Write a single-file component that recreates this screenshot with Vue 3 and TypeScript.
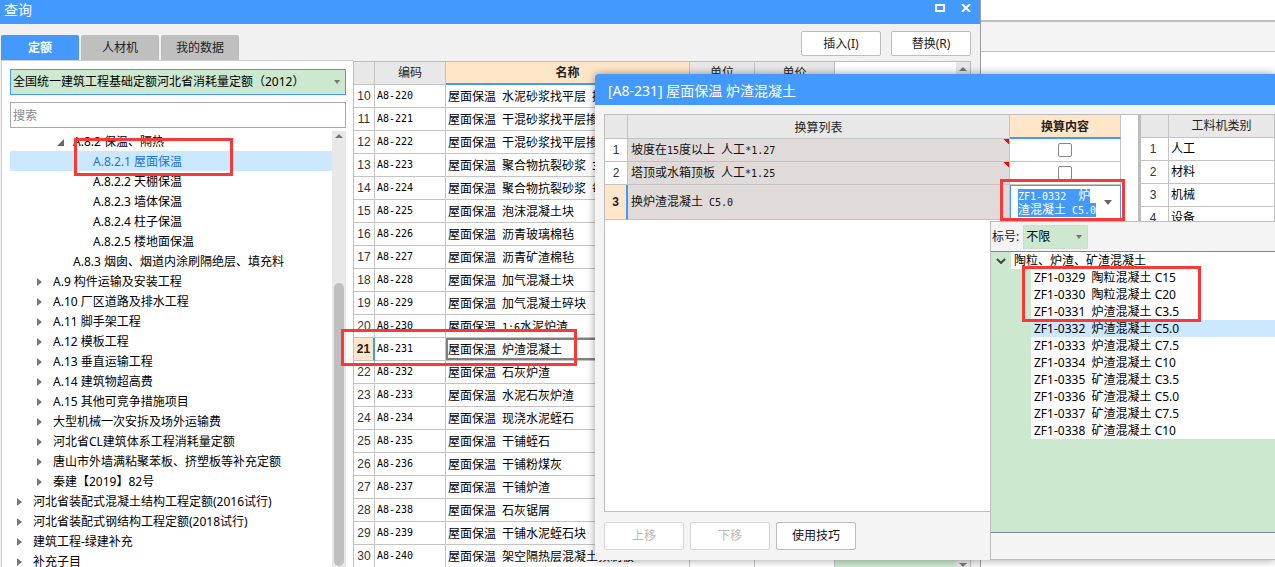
<script setup lang="ts">
import { ref } from 'vue'

interface TreeNode { label: string; level: number; state: 'open' | 'closed' | 'leaf' }
interface QuotaRow { no: number; code: string; name: string }

const tabs = ['定额', '人材机', '我的数据']
const activeTab = ref('定额')
const keyword = ref('')
const selectedNode = ref('A.8.2.1 屋面保温')
const selectedRow = ref(21)
const selectedMix = ref('ZF1-0332  炉渣混凝土 C5.0')

const tree: TreeNode[] = [
  { label: 'A.8.2 保温、隔热', level: 2, state: 'open' },
  { label: 'A.8.2.1 屋面保温', level: 3, state: 'leaf' },
  { label: 'A.8.2.2 天棚保温', level: 3, state: 'leaf' },
  { label: 'A.8.2.3 墙体保温', level: 3, state: 'leaf' },
  { label: 'A.8.2.4 柱子保温', level: 3, state: 'leaf' },
  { label: 'A.8.2.5 楼地面保温', level: 3, state: 'leaf' },
  { label: 'A.8.3 烟囱、烟道内涂刷隔绝层、填充料', level: 2, state: 'leaf' },
  { label: 'A.9 构件运输及安装工程', level: 1, state: 'closed' },
  { label: 'A.10 厂区道路及排水工程', level: 1, state: 'closed' },
  { label: 'A.11 脚手架工程', level: 1, state: 'closed' },
  { label: 'A.12 模板工程', level: 1, state: 'closed' },
  { label: 'A.13 垂直运输工程', level: 1, state: 'closed' },
  { label: 'A.14 建筑物超高费', level: 1, state: 'closed' },
  { label: 'A.15 其他可竞争措施项目', level: 1, state: 'closed' },
  { label: '大型机械一次安拆及场外运输费', level: 1, state: 'closed' },
  { label: '河北省CL建筑体系工程消耗量定额', level: 1, state: 'closed' },
  { label: '唐山市外墙满粘聚苯板、挤塑板等补充定额', level: 1, state: 'closed' },
  { label: '秦建【2019】82号', level: 1, state: 'closed' },
  { label: '河北省装配式混凝土结构工程定额(2016试行)', level: 0, state: 'closed' },
  { label: '河北省装配式钢结构工程定额(2018试行)', level: 0, state: 'closed' },
  { label: '建筑工程-绿建补充', level: 0, state: 'closed' },
  { label: '补充子目', level: 0, state: 'closed' },
]

const names = [
  '水泥砂浆找平层 掺', '干混砂浆找平层掺', '干混砂浆找平层掺', '聚合物抗裂砂浆 3', '聚合物抗裂砂浆 每',
  '泡沫混凝土块', '沥青玻璃棉毡', '沥青矿渣棉毡', '加气混凝土块', '加气混凝土碎块', '1:6水泥炉渣',
  '炉渣混凝土', '石灰炉渣', '水泥石灰炉渣', '现浇水泥蛭石', '干铺蛭石', '干铺粉煤灰', '干铺炉渣',
  '石灰锯屑', '干铺水泥蛭石块', '架空隔热层混凝土预制板',
]
const rows: QuotaRow[] = names.map((n, i) => ({ no: 10 + i, code: `A8-${220 + i}`, name: `屋面保温 ${n}` }))

const conversions = [
  { text: '坡度在15度以上 人工*1.27', on: ref(false) },
  { text: '塔顶或水箱顶板 人工*1.25', on: ref(false) },
]
const categories = ['人工', '材料', '机械', '设备']
const mixes = [
  'ZF1-0329  陶粒混凝土 C15', 'ZF1-0330  陶粒混凝土 C20', 'ZF1-0331  炉渣混凝土 C3.5',
  'ZF1-0332  炉渣混凝土 C5.0', 'ZF1-0333  炉渣混凝土 C7.5', 'ZF1-0334  炉渣混凝土 C10',
  'ZF1-0335  矿渣混凝土 C3.5', 'ZF1-0336  矿渣混凝土 C5.0', 'ZF1-0337  矿渣混凝土 C7.5',
  'ZF1-0338  矿渣混凝土 C10',
]
const editorLines = ['ZF1-0332  炉', '渣混凝土 C5.0']

// Grid cells set half-width characters in a monospaced face, so they are split from the Chinese runs.
const parts = (s: string): string[] => s.split(/([ -~]+)/).filter(Boolean)
const isHalf = (s: string): boolean => /^[ -~]/.test(s)
</script>

<template>
  <div class="desktop">
    <div class="backdrop"><div class="backdrop-bar"></div></div>

    <section class="query" aria-label="查询">
      <header class="query-title">
        <h1>查询</h1>
        <div class="win-buttons">
          <button type="button" aria-label="最大化">
            <svg width="10" height="8" viewBox="0 0 10 8"><rect x="1" y="1" width="8" height="6" fill="none" stroke="#fff" stroke-width="2" /></svg>
          </button>
          <button type="button" aria-label="关闭">
            <svg width="10" height="8" viewBox="0 0 10 8"><path d="M1 0 9 8M9 0 1 8" fill="none" stroke="#fff" stroke-width="2" /></svg>
          </button>
        </div>
      </header>

      <div class="toolbar">
        <nav class="tabs">
          <button v-for="t in tabs" :key="t" type="button" class="tab" :class="{ active: t === activeTab }" @click="activeTab = t">{{ t }}</button>
        </nav>
        <div class="actions">
          <button type="button" class="btn">插入(I)</button>
          <button type="button" class="btn">替换(R)</button>
        </div>
      </div>

      <div class="query-body">
        <aside class="side">
          <div class="pick library">
            <select aria-label="定额库"><option>全国统一建筑工程基础定额河北省消耗量定额（2012）</option></select>
            <svg width="6" height="4" viewBox="0 0 6 4"><path d="M0 0h6L3 4z" fill="#777" /></svg>
          </div>
          <input v-model="keyword" class="search" type="text" placeholder="搜索" aria-label="搜索" />
          <div class="tree-box">
            <ul class="tree">
              <li v-for="n in tree" :key="n.label" :class="['lv' + n.level, { chosen: n.label === selectedNode }]" @click="selectedNode = n.label">
                <span class="twist">
                  <svg v-if="n.state === 'closed'" width="5" height="8" viewBox="0 0 5 8"><path d="M0 0 5 4 0 8z" fill="#777" /></svg>
                  <svg v-else-if="n.state === 'open'" width="7" height="7" viewBox="0 0 7 7"><path d="M7 0v7H0z" fill="#666" /></svg>
                </span>
                <span>{{ n.label }}</span>
              </li>
            </ul>
            <div class="scroll">
              <svg width="8" height="4" viewBox="0 0 8 4"><path d="M0 4 4 0l4 4z" fill="#777" /></svg>
              <i class="thumb"></i>
            </div>
          </div>
        </aside>

        <div class="grid-pane">
          <table class="grid quota">
            <colgroup><col class="c-no" /><col class="c-code" /><col class="c-name" /><col class="c-unit" /><col class="c-price" /></colgroup>
            <thead><tr><th></th><th>编码</th><th class="hot">名称</th><th>单位</th><th>单价</th></tr></thead>
            <tbody>
              <tr v-for="r in rows" :key="r.no" :class="{ current: r.no === selectedRow }" @click="selectedRow = r.no">
                <td class="no">{{ r.no }}</td>
                <td class="code"><span class="half">{{ r.code }}</span></td>
                <td class="name"><span v-for="(p, i) in parts(r.name)" :key="i" :class="{ half: isHalf(p) }">{{ p }}</span></td>
                <td></td><td></td>
              </tr>
            </tbody>
          </table>
          <div class="void"></div>
          <div class="scroll tall">
            <svg width="8" height="4" viewBox="0 0 8 4"><path d="M0 4 4 0l4 4z" fill="#777" /></svg>
            <svg width="8" height="4" viewBox="0 0 8 4"><path d="M0 0h8L4 4z" fill="#777" /></svg>
          </div>
        </div>
      </div>
    </section>

    <section class="dialog" aria-label="换算">
      <header class="dialog-title"><h2>[A8-231] 屋面保温 炉渣混凝土</h2></header>
      <div class="dialog-body">
        <div class="frames">
          <div class="left-frame">
            <table class="grid conv">
              <colgroup><col class="d-no" /><col class="d-list" /><col class="d-content" /></colgroup>
              <thead><tr><th></th><th>换算列表</th><th class="hot">换算内容</th></tr></thead>
              <tbody>
                <tr v-for="(c, k) in conversions" :key="k">
                  <td class="no">{{ k + 1 }}</td>
                  <td class="item flagged"><span v-for="(p, i) in parts(c.text)" :key="i" :class="{ half: isHalf(p) }">{{ p }}</span></td>
                  <td class="tick"><input v-model="c.on.value" type="checkbox" :aria-label="c.text" /></td>
                </tr>
                <tr class="current big">
                  <td class="no">3</td>
                  <td class="item"><span v-for="(p, i) in parts('换炉渣混凝土 C5.0')" :key="i" :class="{ half: isHalf(p) }">{{ p }}</span></td>
                  <td class="edit">
                    <button type="button" aria-haspopup="listbox" aria-expanded="true">
                      <span class="value">
                        <mark v-for="l in editorLines" :key="l"><span v-for="(p, i) in parts(l)" :key="i" :class="{ half: isHalf(p) }">{{ p }}</span></mark>
                      </span>
                      <svg width="8" height="5" viewBox="0 0 8 5"><path d="M0 0h8L4 5z" fill="#666" /></svg>
                    </button>
                  </td>
                </tr>
              </tbody>
            </table>
          </div>
          <div class="right-frame">
            <table class="grid kinds">
              <colgroup><col class="k-no" /><col /></colgroup>
              <thead><tr><th></th><th>工料机类别</th></tr></thead>
              <tbody><tr v-for="(c, k) in categories" :key="c"><td class="no">{{ k + 1 }}</td><td>{{ c }}</td></tr></tbody>
            </table>
          </div>
        </div>
        <footer class="foot">
          <button type="button" class="btn" disabled>上移</button>
          <button type="button" class="btn" disabled>下移</button>
          <button type="button" class="btn">使用技巧</button>
        </footer>
      </div>
    </section>

    <section class="popup" aria-label="材料选择">
      <div class="popup-head">
        <label for="grade">标号:</label>
        <div class="pick grade">
          <select id="grade"><option>不限</option></select>
          <svg width="6" height="4" viewBox="0 0 6 4"><path d="M0 0h6L3 4z" fill="#777" /></svg>
        </div>
      </div>
      <div class="popup-list">
        <div class="group">
          <span class="chev"><svg width="10" height="6" viewBox="0 0 10 6"><path d="M1 1l4 4 4-4" fill="none" stroke="#444" stroke-width="2" /></svg></span>
          <span class="group-name">陶粒、炉渣、矿渣混凝土</span>
        </div>
        <ul>
          <li v-for="m in mixes" :key="m" :class="{ chosen: m === selectedMix }" @click="selectedMix = m">{{ m }}</li>
        </ul>
      </div>
    </section>

    <i class="callout on-tree"></i>
    <i class="callout on-row"></i>
    <i class="callout on-edit"></i>
    <i class="callout on-list"></i>
  </div>
</template>

<style>
html, body { margin: 0; overflow: hidden; }
</style>

<style scoped>
.desktop {
  position: relative; height: 100vh; overflow: hidden; background: #fff; color: #000;
  font: 12px/20px "Noto Sans", "Noto Sans CJK SC", sans-serif;
}
.desktop *, .desktop *::before { box-sizing: border-box; }
button, select, input { font: inherit; color: inherit; margin: 0; }
ul { list-style: none; margin: 0; padding: 0; }
h1, h2 { margin: 0; font-weight: 400; font-size: 14px; color: #fff; }
svg { display: block; flex: none; }

.backdrop { position: absolute; inset: 0; padding-top: 20px; }
.backdrop-bar { height: 32px; background: #f4f4f4; border-top: 2px solid #bfbfbf; border-bottom: 1px solid #c4c4c4; }

.query {
  position: absolute; left: 0; right: 294px; top: 0; bottom: 0; display: flex; flex-direction: column;
  background: #f1f1f1; border-right: 1px solid #9c9c9c; overflow: hidden;
}
.query-title { flex: none; height: 24px; background: #4499ff; display: flex; justify-content: space-between; padding: 0 9px 0 4px; }
.win-buttons { display: flex; gap: 16px; padding-top: 4px; }
.win-buttons button { border: 0; padding: 0; width: 10px; height: 8px; background: none; display: block; }

.toolbar { flex: none; height: 36px; display: flex; justify-content: space-between; padding: 0 9px 0 1px; }
.tabs { display: flex; gap: 2px; align-items: flex-end; }
.tab { width: 78px; height: 25px; border: 0; padding: 0; border-radius: 2px 2px 0 0; background: #bfbfbf; color: #222; }
.tab.active { background: #4499ff; color: #fff; font-weight: 700; }
.actions { display: flex; gap: 10px; padding-top: 7px; }
.btn { width: 80px; height: 25px; padding: 0; border: 1px solid #bdbdbd; border-radius: 2px; background: #fff; color: #222; }

.query-body { flex: 1; min-height: 0; display: flex; padding: 0 9px 0 1px; }
.side {
  flex: none; width: 352px; background: #fff; border: solid #cfcfcf; border-width: 1px 0 0 1px;
  padding: 8px 7px 0 8px; display: flex; flex-direction: column;
}
.pick { position: relative; background: #cce8cf; border: 1px solid #cfdccf; }
.pick select { appearance: none; display: block; width: 100%; height: 100%; border: 0; padding: 0 16px 0 2px; background: none; outline: none; color: #000; }
.pick svg { position: absolute; right: 5px; top: 0; bottom: 0; margin: auto 0; pointer-events: none; }
.library { height: 26px; border-color: #4499ff; }
.search { height: 26px; margin-top: 7px; border: 1px solid #a9a9a9; padding: 0 2px; background: #fff; outline: none; }
.search::placeholder { color: #888; opacity: 1; }
.tree-box { flex: 1; min-height: 0; margin-top: 3px; display: flex; overflow: hidden; }
.tree { flex: 1; min-width: 0; }
.tree li { display: flex; height: 20px; line-height: 22px; white-space: pre; }
.tree li.chosen { background: #cce8ff; color: #1a73e0; }
.lv0 { padding-left: 3px; } .lv1 { padding-left: 23px; } .lv2 { padding-left: 43px; } .lv3 { padding-left: 63px; }
.twist { flex: none; width: 20px; display: flex; align-items: center; padding: 2px 0 0 4px; }
.scroll { flex: none; width: 14px; background: #e8e8e8; display: flex; flex-direction: column; align-items: center; padding-top: 3px; }
.thumb { width: 10px; flex: 1; margin: 145px 0 1px; background: #bfbfbf; border-radius: 5px; }

.grid-pane { flex: 1; min-width: 0; display: flex; background: #fff; border: solid #bdbdbd; border-width: 1px 1px 0; overflow: hidden; margin-top: 1px; }
.grid { border-collapse: separate; border-spacing: 0; table-layout: fixed; font-family: "Liberation Sans", "Noto Sans CJK SC", sans-serif; line-height: 18px; }
.grid th, .grid td { padding: 0; height: 23px; border: solid #c3c3c3; border-width: 0 1px 1px 0; overflow: hidden; white-space: nowrap; text-align: left; }
.grid th { background: #e8e8e8; font-weight: 400; text-align: center; color: #222; }
.grid th.hot { background: #ffe6c8; font-weight: 700; border-bottom: 2px solid #4499ff; }
.grid td.no { text-align: center; color: #333; }
.grid .half { font-family: "DejaVu Sans Mono", monospace; font-size: 10px; white-space: pre; }
.grid .current .no { background: #ffe6c8; color: #222; font-weight: 700; border-right: 2px solid #4499ff; }
.quota { flex: none; width: 481px; height: fit-content; }
.c-no { width: 21px; } .c-code { width: 71px; } .c-name { width: 244px; } .c-unit { width: 65px; } .c-price { width: 80px; }
.quota td.code { padding: 0 0 2px 2px; }
.quota td.name { padding: 2px 0 0 2px; }
.quota .current .name { box-shadow: inset 0 0 0 2px #808080; }
.void { flex: 1; background: #cce8cf; border-top: 23px solid #fff; }
.tall { justify-content: space-between; padding: 5px 0 0; }

.dialog {
  position: absolute; left: 595px; right: 0; top: 74px; bottom: 7px; display: flex; flex-direction: column;
  background: #f4f4f4; border-radius: 4px 0 0 4px; box-shadow: 0 0 9px rgba(0, 0, 0, .4);
}
.dialog-title { flex: none; height: 31px; background: #4499ff; border-radius: 4px 0 0 0; padding: 7px 13px 0; }
.dialog-body { flex: 1; min-height: 0; display: flex; flex-direction: column; padding: 9px 0 10px 9px; }
.frames { flex: 1; min-height: 0; display: flex; border: solid #bdbdbd; border-width: 1px 0 1px 1px; background: #fff; }
.left-frame { flex: none; width: 533px; }
.conv { width: 516px; }
.d-no { width: 23px; } .d-list { width: 382px; } .d-content { width: 111px; }
.conv th { height: 24px; padding-top: 2px; }
.conv .item { background: #e0dbd8; padding-left: 3px; color: #111; }
.conv .flagged { background: linear-gradient(225deg, #f00 4px, transparent 4px) #e0dbd8; }
.grid td.tick { text-align: center; }
.tick input { appearance: none; display: block; width: 14px; height: 14px; margin: 0 auto; border: 1px solid #888; border-radius: 2px; background: #fff; }
.tick input:checked { background: #4499ff; }
.conv .big td { height: 35px; }
.grid td.edit { border-color: #4499ff; }
.edit button { width: 100%; height: 34px; border: 1px solid #4499ff; border-width: 1px 0 0 1px; background: #fff; padding: 0 8px 0 7px; display: flex; justify-content: space-between; align-items: center; text-align: left; }
.value { display: flex; flex-direction: column; align-items: flex-start; line-height: 14px; white-space: nowrap; }
.value mark { display: block; height: 14px; background: #4499ff; color: #fff; }
.right-frame { flex: 1; min-width: 0; border-left: 3px solid #bdbdbd; }
.kinds { width: 100%; }
.k-no { width: 28px; }
.kinds td { padding-left: 2px; }
.kinds td.no { padding: 0 3px 0 0; }
.foot { flex: none; display: flex; gap: 6px; padding-top: 10px; }
.foot .btn { height: 28px; color: #111; }
.foot .btn:disabled { color: #b9b9b9; border-color: #d6d6d6; }

.popup {
  position: absolute; left: 990px; right: 0; top: 221px; bottom: 7px; display: flex; flex-direction: column;
  background: #f4f4f4; border: solid #bdbdbd; border-width: 1px 0 1px 1px; padding-bottom: 26px;
}
.popup-head { flex: none; height: 29px; display: flex; align-items: center; gap: 4px; padding-left: 1px; color: #222; }
.grade { width: 65px; height: 24px; }
.popup-list { flex: 1; min-height: 0; background: #cce8cf; border: solid #7f8790; border-width: 1px 0 1px 0; line-height: 17px; }
.group { display: flex; height: 17px; }
.chev { flex: none; width: 20px; display: flex; align-items: center; justify-content: center; }
.group-name { flex: 1; background: #fff; padding-left: 3px; }
.popup-list li { margin-left: 40px; padding-left: 3px; height: 17px; background: #fff; white-space: pre; }
.popup-list li.chosen { background: #cce8ff; }

.callout { position: absolute; border: 3px solid #fb3838; pointer-events: none; }
.on-tree { left: 74px; top: 138px; width: 159px; height: 38px; }
.on-row { left: 341px; top: 329px; width: 236px; height: 37px; }
.on-edit { left: 1000px; top: 179px; width: 125px; height: 42px; }
.on-list { left: 1022px; top: 266px; width: 179px; height: 56px; }
</style>
